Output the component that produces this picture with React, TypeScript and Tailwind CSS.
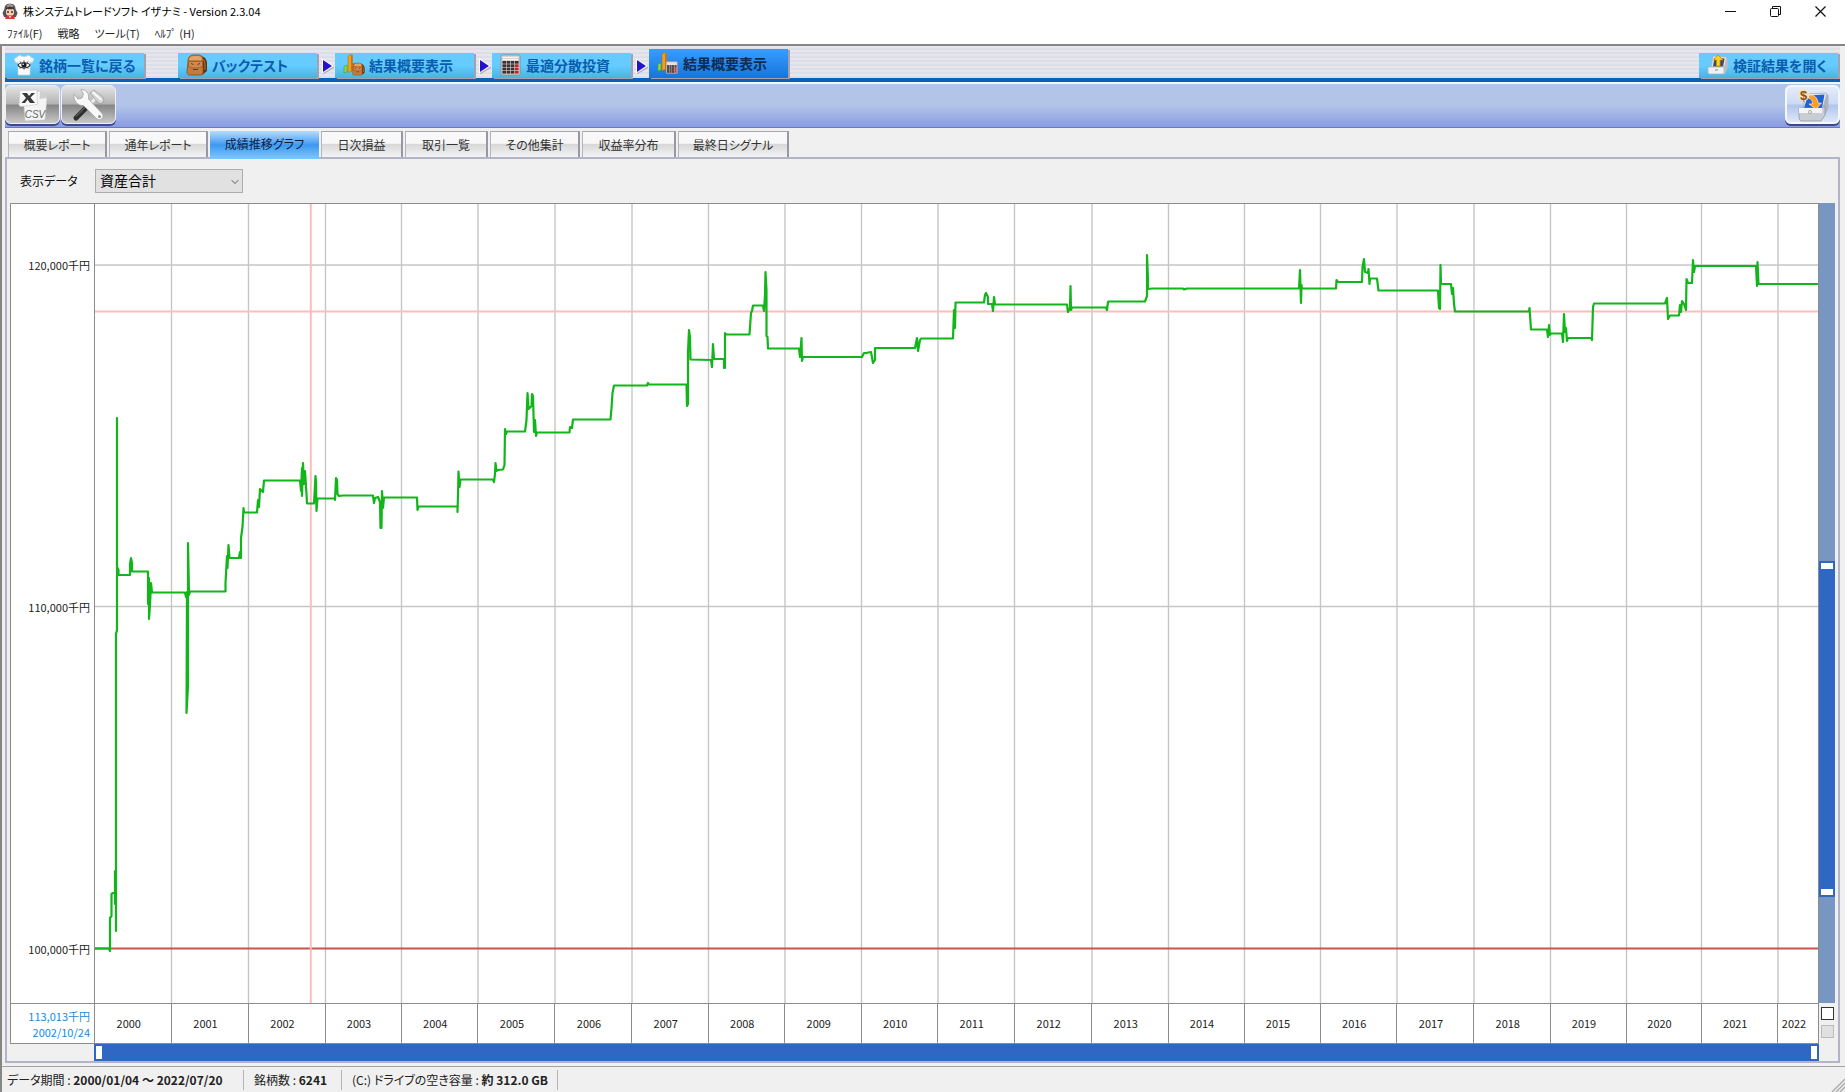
import { useState } from 'react';
import type { ReactNode } from 'react';
import { ChevronDown } from 'lucide-react';

/* ---------- icons ---------- */

function GirlIcon() {
  return (
    <svg viewBox="0 0 16 16" className="size-4" aria-hidden="true">
      <path d="M2.500 6C2.500 2 5 .8 8 .8s5.500 1.200 5.500 5.200l2 4-1.500 4-3 .5H5L2 14 .5 10z" fill="#5a5054" />
      <path d="M4.500 2.500 8 .5l3.500 2-1 2h-5z" fill="#9b9598" />
      <path d="M4 6h8v4c0 2-2 3-4 3s-4-1-4-3z" fill="#f7cfae" />
      <path d="M4 7.500 5.500 5 7 7l1-2 1 2 1.500-2L12 7.500V5L8 3.500 4 5z" fill="#3b3134" />
      <path d="M5 9h2M9 9h2" stroke="#403030" strokeWidth="1.300" />
      <path d="M4 13.500 7 12.500h2l3 1 1 2.500H3z" fill="#d8352c" />
      <path d="M7.200 13h1.600v1.500H7.200z" fill="#fff" />
    </svg>
  );
}

function ShirtIcon() {
  return (
    <svg viewBox="0 0 22 22" className="size-[22px]" aria-hidden="true">
      <path d="M7 1c1 2 7 2 8 0l6 4-2 4-2-1v13H5V8L3 9 1 5z" fill="#f8fafc" stroke="#c4d4e0" strokeWidth=".7" />
      <path d="M5 11c2-3 10-3 12 0-2 4-10 4-12 0z" fill="#fff" stroke="#2a2a2a" strokeWidth="1.200" />
      <circle cx="11" cy="11" r="2.600" fill="#1d1d1d" />
      <circle cx="10.200" cy="10.300" r=".8" fill="#fff" />
      <path d="M7 7.500l.8 1.300M11 6.500V8M15 7.500l-.8 1.300M7 14.500l.8-1M11 15.500V14M15 14.500l-.8-1" stroke="#333" strokeWidth="1" />
    </svg>
  );
}

function PackShape() {
  return (
    <>
      <path d="M14 2c5 0 7 4 7 8v7l-5 4z" fill="#5e3210" />
      <path d="M16.500 5c2 1 2.500 3 2.500 6v5" stroke="#a86a34" strokeWidth="1.200" fill="none" />
      <path d="M2 7c0-4 2-6 6-6h4c4 0 5 2 5 6v11c0 2-1 3-3 3H4c-2 0-3-1-3-3z" fill="#c47c3c" stroke="#8a4b18" strokeWidth=".8" />
      <path d="M3 6c1-3 2-4 5-4h4c2 0 3.500 1 4 4z" fill="#e0a468" />
      <path d="M2.500 7.500h14v5c-4 2-10 2-14 0z" fill="#d08a4c" stroke="#8a4b18" strokeWidth=".6" />
      <path d="M5 9.500l2.500 1M14 9.500l-2.500 1M7 15.500h5" stroke="#6b3a12" strokeWidth="1" fill="none" />
    </>
  );
}

function BarsShape() {
  return (
    <>
      <path d="M1 12l3-1v7l-3 1z" fill="#8fd63a" stroke="#3e9a1c" strokeWidth=".5" />
      <path d="M5 2l3-1.500L9.500 1v16L5 18.500z" fill="#f0a020" stroke="#b56a10" strokeWidth=".5" />
      <path d="M8 .8l1.500.2v16L8 17.500z" fill="#c47712" />
      <path d="M9.500 9h3v7l-3 1z" fill="#e05a28" />
    </>
  );
}

function CalcShape() {
  const cells = [0, 1, 2, 3];
  return (
    <>
      <rect x="1" y="1" width="19" height="20" rx="1.500" fill="#d8d5d5" stroke="#8d8585" strokeWidth=".8" />
      <path d="M3 3.500h15M3 5.500h15" stroke="#f6f4f4" strokeWidth="1" />
      {cells.map((row) =>
        cells.map((col) => (
          <rect
            key={`${row}-${col}`}
            x={2.4 + col * 4.2}
            y={7 + row * 3.3}
            width="3.600"
            height="2.700"
            fill={col === 3 && row > 0 ? '#c4222a' : '#3c3030'}
          />
        )),
      )}
    </>
  );
}

function BackpackIcon() {
  return (
    <svg viewBox="0 0 22 22" className="size-[22px]" aria-hidden="true">
      <PackShape />
    </svg>
  );
}

function CalculatorIcon() {
  return (
    <svg viewBox="0 0 22 22" className="size-[22px]" aria-hidden="true">
      <CalcShape />
    </svg>
  );
}

function BarsPackIcon() {
  return (
    <svg viewBox="0 0 22 22" className="size-[22px]" aria-hidden="true">
      <BarsShape />
      <g transform="translate(9 8.500) scale(.6)">
        <PackShape />
      </g>
    </svg>
  );
}

function BarsCalcIcon() {
  return (
    <svg viewBox="0 0 22 22" className="size-[22px]" aria-hidden="true">
      <BarsShape />
      <g transform="translate(8.500 9) scale(.6)">
        <CalcShape />
      </g>
    </svg>
  );
}

function OpenTrayIcon() {
  return (
    <svg viewBox="0 0 22 22" className="size-[22px]" aria-hidden="true">
      <path d="M6 2l14 1-2 10H4z" fill="#dfe1e6" stroke="#a9adb5" strokeWidth=".7" />
      <path d="M7.500 4l10 .5-1.500 8H6z" fill="#3e4a66" />
      <path d="M1 13h16v7H3c-1 0-2-.5-2-2z" fill="#eef0f3" stroke="#a9adb5" strokeWidth=".7" />
      <path d="M17 13l3-9 1 1v8l-3 7h-1z" fill="#b8bcc4" />
      <path d="M8 16h3" stroke="#888" />
      <path d="M11 1l5 5h-3v6H9.500V6H6.500z" fill="#ffd21e" stroke="#c98e08" strokeWidth=".8" />
    </svg>
  );
}

function CsvIcon() {
  return (
    <svg viewBox="0 0 32 34" className="h-[34px] w-8" aria-hidden="true">
      <path d="M6 6 23 3l7 7-2 22-20 1z" fill="#f4f4f4" stroke="#bdbdbd" strokeWidth=".6" />
      <path d="M23 3l-.5 8 7.500-1z" fill="#cfcfcf" />
      <path d="M3 2.500 20 2l.5 14.500L4 18.500l-2-1z" fill="#fafafa" stroke="#c8c8c8" strokeWidth=".6" />
      <path d="M5 5h5l2 3 2.500-3H18l-4.500 4.500L18 15h-5l-2.500-3.500L8 15H4.500L9 10z" fill="#3a3a3a" />
      <text x="18" y="30" textAnchor="middle" fontSize="10" fontStyle="italic" fill="#666" fontFamily="Liberation Sans, sans-serif">
        CSV
      </text>
    </svg>
  );
}

function ToolsIcon() {
  return (
    <svg viewBox="0 0 34 34" className="size-[34px]" aria-hidden="true">
      {/* hammer */}
      <path d="M4 30 17 17" stroke="#2e2e2e" strokeWidth="5" strokeLinecap="round" />
      <path d="M4 28.500 15 17.500" stroke="#777" strokeWidth="1" />
      <path d="M17 17l7-7" stroke="#ececec" strokeWidth="3" />
      <path d="M18 5l4-3 9 7 1 4-3 3-3-1z" fill="#d2d2d2" stroke="#8f8f8f" strokeWidth=".6" />
      <path d="M20.500 4l9 8" stroke="#fbfbfb" strokeWidth="1.800" />
      {/* wrench */}
      <path
        d="M2 6l4 5 4-1 1.500-4L9 1.500c5 0 8.500 4 7.500 9.500L30.500 26c2 3.500-2 7.500-5.500 5L11.500 17.500C6 18 1 13 2 6z"
        fill="#f8f8f8"
        stroke="#9c9c9c"
        strokeWidth=".7"
      />
      <circle cx="27.500" cy="28.500" r="1.500" fill="#8c8c8c" />
    </svg>
  );
}

function ChestIcon() {
  return (
    <svg viewBox="0 0 32 34" className="h-[34px] w-8" aria-hidden="true">
      <path d="M9 6l20-1 2 2-2 14H6z" fill="#e8eaef" stroke="#9da2ad" strokeWidth=".7" />
      <path d="M11 7.500l16.500-1L25 20H7z" fill="#1f62d0" />
      <path d="M25 21l4.500-15 2 2v12l-5 10z" fill="#aeb3bd" />
      <path d="M2 20h23l3-2v9l-4 6H4l-2-2z" fill="#c9cdd5" stroke="#8d929c" strokeWidth=".7" />
      <path d="M2 20h23v5H2z" fill="#f3f4f7" />
      <circle cx="13" cy="24" r="1.500" fill="#fff" stroke="#777" strokeWidth=".6" />
      <path d="M11 7c6-1 10 3 10 8h3.500L19 21l-7-5h3.500c0-4-2-6-5.500-6z" fill="#ff9d1c" stroke="#fff" strokeWidth=".6" />
      <circle cx="6.500" cy="7" r="6" fill="#f4e3c0" />
      <text x="6.500" y="11.500" textAnchor="middle" fontSize="13" fontWeight="bold" fill="#8f4d0c" fontFamily="Liberation Sans, sans-serif">
        $
      </text>
    </svg>
  );
}

function StepArrow() {
  return (
    <svg viewBox="0 0 14 18" className="h-[18px] w-[14px]" aria-hidden="true">
      <path d="M2 17.500V15.500l11-6.500v2z" fill="#b4b4be" />
      <path d="M1 1.500v15l12-7.500z" fill="#fff" />
      <path d="M2 3v12l9-6z" fill="#2412cf" />
    </svg>
  );
}

/* ---------- header ---------- */

interface NavTabProps {
  icon: ReactNode;
  label: string;
  active?: boolean;
}

function NavTab({ icon, label, active }: NavTabProps) {
  return (
    <button
      type="button"
      className={`flex w-[139px] items-center gap-1 pl-2 text-left text-[14px] leading-5 font-bold whitespace-nowrap shadow-[2px_1px_0_#a4a0b0] ${
        active
          ? 'h-[29px] bg-linear-to-b from-[#3a9cff] to-[#1276dc] pb-[2px] text-[#0c2c54]'
          : 'h-[25px] bg-linear-to-b from-[#66ccff] from-50% to-[#46b4de] pb-[2px] text-[#0a5cb0]'
      }`}
    >
      {icon}
      {label}
    </button>
  );
}

function TitleBar() {
  return (
    <header className="flex h-6 items-center justify-between bg-white pr-[2px] pb-[2px] pl-[2px]">
      <h1 className="flex items-center gap-[5px] text-[11px] leading-4 text-black">
        <GirlIcon />
        株システムトレードソフト イザナミ - Version 2.3.04
      </h1>
      <div className="flex h-full">
        <button type="button" aria-label="最小化" className="grid w-[45px] place-items-center">
          <svg viewBox="0 0 11 11" className="size-[11px]">
            <path d="M0 5.500h11" stroke="#111" />
          </svg>
        </button>
        <button type="button" aria-label="元に戻す" className="grid w-[45px] place-items-center">
          <svg viewBox="0 0 11 11" className="size-[11px]" fill="none" stroke="#111">
            <rect x=".5" y="2.500" width="8" height="8" rx="1" />
            <path d="M2.500 2.500V.5h8v8h-2" />
          </svg>
        </button>
        <button type="button" aria-label="閉じる" className="grid w-[45px] place-items-center">
          <svg viewBox="0 0 11 11" className="size-[11px]">
            <path d="M.5.5l10 10M10.500.5l-10 10" stroke="#111" strokeWidth="1.200" />
          </svg>
        </button>
      </div>
    </header>
  );
}

const MENU = ['ﾌｧｲﾙ(F)', '戦略', 'ツール(T)', 'ﾍﾙﾌﾟ (H)'];

function MenuBar() {
  return (
    <nav className="flex h-5 items-center gap-[15px] bg-white pb-[2px] pl-[7px] text-[11px] leading-4 text-[#222]">
      {MENU.map((item) => (
        <button key={item} type="button">
          {item}
        </button>
      ))}
    </nav>
  );
}

function StepNav() {
  return (
    <nav className="flex h-9 items-end justify-between border-b-4 border-[#0a62b6] bg-[repeating-linear-gradient(to_bottom,#e6e6ee_0_2px,#dedee8_2px_4px)]">
      <div className="flex items-end">
        <NavTab icon={<ShirtIcon />} label="銘柄一覧に戻る" />
        <div className="w-[34px]" />
        <NavTab icon={<BackpackIcon />} label="バックテスト" />
        <div className="flex h-[25px] w-[18px] items-center justify-end">
          <StepArrow />
        </div>
        <NavTab icon={<BarsPackIcon />} label="結果概要表示" />
        <div className="flex h-[25px] w-[18px] items-center justify-end">
          <StepArrow />
        </div>
        <NavTab icon={<CalculatorIcon />} label="最適分散投資" />
        <div className="flex h-[25px] w-[18px] items-center justify-end">
          <StepArrow />
        </div>
        <NavTab icon={<BarsCalcIcon />} label="結果概要表示" active />
      </div>
      <div className="pr-[2px]">
        <NavTab icon={<OpenTrayIcon />} label="検証結果を開く" />
      </div>
    </nav>
  );
}

const GRAY_BUTTON =
  'grid h-[39px] w-[55px] place-items-center rounded-md border border-[#f0f0f4] bg-[linear-gradient(to_bottom,#e4e4e4,#b4b4b4_48%,#868686_52%,#c8c8c8)] shadow-[0_2px_0_#3c4a8c]';

function Toolbar() {
  return (
    <div className="flex h-[46px] items-start justify-between border-t-2 border-b border-t-[#f2f6fc] border-b-[#6c78c0] bg-linear-to-b from-[#b2c4e8] from-50% to-[#8a9ce2] pt-px">
      <div className="flex gap-px">
        <button type="button" aria-label="CSV出力" className={GRAY_BUTTON}>
          <CsvIcon />
        </button>
        <button type="button" aria-label="設定" className={GRAY_BUTTON}>
          <ToolsIcon />
        </button>
      </div>
      <button
        type="button"
        aria-label="検証結果を保存"
        className="grid h-[39px] w-[55px] place-items-center rounded-md border-2 border-[#f4f7ff] bg-[linear-gradient(to_bottom,#e4ecfa,#ccdaf4_48%,#b0c4ec_52%,#dfe8fa)] shadow-[0_2px_0_#3c4a8c]"
      >
        <ChestIcon />
      </button>
    </div>
  );
}

/* ---------- report tabs ---------- */

const TABS = [
  { label: '概要レポート', width: 'w-[99px]' },
  { label: '通年レポート', width: 'w-[99px]' },
  { label: '成績推移グラフ', width: 'w-[109px]' },
  { label: '日次損益', width: 'w-[82px]' },
  { label: '取引一覧', width: 'w-[83px]' },
  { label: 'その他集計', width: 'w-[90px]' },
  { label: '収益率分布', width: 'w-[94px]' },
  { label: '最終日シグナル', width: 'w-[111px]' },
];

function ReportTabs() {
  const [active, setActive] = useState(2);
  return (
    <div role="tablist" className="flex h-[26px] items-start gap-[2px] pl-[3px]">
      {TABS.map((tab, i) => (
        <button
          key={tab.label}
          type="button"
          role="tab"
          aria-selected={i === active}
          onClick={() => setActive(i)}
          className={`${tab.width} text-[12px] leading-4 whitespace-nowrap ${
            i === active
              ? 'z-10 h-7 bg-linear-to-b from-[#b4dcff] via-[#3c98f0] via-50% to-[#7cc8ff] pb-[2px] text-[#10203c]'
              : 'h-[26px] border-t border-r-2 border-l border-t-[#a8a8b4] border-r-[#9898a4] border-l-[#b4b4bc] bg-linear-to-b from-[#f8f8f8] from-45% via-[#d8d8d8] via-50% to-[#f4f4f4] text-[#333]'
          }`}
        >
          {tab.label}
        </button>
      ))}
    </div>
  );
}

/* ---------- chart ---------- */

// plot extents in chart units
const PLOT = { left: 95, right: 1818, top: 204, bottom: 1003 };
const PLOT_W = PLOT.right - PLOT.left;
const PLOT_H = PLOT.bottom - PLOT.top;

const YEAR_EDGES = [
  95, 171.5, 248.5, 325.5, 401.5, 478, 555, 632, 708.5, 785, 861.5, 938, 1014.5, 1092, 1168.5, 1244.5, 1320.5, 1397,
  1474, 1550.5, 1626.5, 1701.5, 1778, 1818,
];
const YEAR_COLUMNS = YEAR_EDGES.slice(1)
  .map((x, i) => `minmax(0, ${x - YEAR_EDGES[i]}fr)`)
  .join(' ');

const LEVELS = [
  { y: 265, label: '120,000千円' },
  { y: 606.5, label: '110,000千円' },
  { y: 948.5, label: '100,000千円' },
];

const EQUITY = `
  94,948.5 109,948.5 110,951 110,918 111.5,916 111.5,894 113,893 115,893 115,871 115,904 116,893 116,931 116,634 117,630
  117,418 117,567 118.5,570 118.5,575 130,575 130,564 131,558 132,563 132,571.5 148,571.5 148,604 149,578 149,619
  150,605 151,583 152,592.5 185,592.5 186,597 187,592 186.5,713 188,686 188,543 189,595 190,591.5 225.5,591.5
  225.5,583 227,556 227.5,568 228.5,545 229.5,558 239,558 240,552 241,558 241,538 242.5,527 243.5,508 244,512.5
  257,512.5 258,500 259,507 260,489 263,492 264,480.5 300,480.5 301,491 302,468 302,496 303,463 304,484 305,471
  306.5,494 307,503.5 314,503.5 315,485 315.5,476 316,482 316.5,511 317.5,498.5 335,498.5 335,500 336,478 337,480
  337.5,494 339,496 343,495.5 373,495.5 374,503 375,498 378,497 380,502 380.5,528 381.5,528 382,491 383,508 384,497.5
  417,497.5 417.5,510 418.5,506.5 457.5,506.5 457.5,512 458,495 458.5,471.5 459.5,487 460.5,479.5 493,479.5
  494,482 495,474 495.5,463 496.5,471 497.5,470 503,469.5 504.5,465 505,429 506,434 507,431.5 525,431.5
  526.5,420 527.5,393 528.5,409 531.5,406 532,394 533,396 534,432 535,420 536,436 537,432.5 569.5,432.5 570,427
  572,428 573,419.5 610.5,419.5 611.5,408 612.5,393 614,385.5 647,385.5 648,383 649,384.5 686.5,384.5
  687,406 688,404 688,352 689,330 690,337 690.5,359.5 711,360 712,367 713,344 714,359 724,359 724,368 725,368
  725,333 726,334.5 749.5,334.5 751,313 752,311 753,305.5 763,305.5 764,311 765,295 765.5,272 766.5,290 766.5,336
  767.5,337 768,348.5 799,348.5 800,357 801.5,338 802,361 803,357 862,357 864,353 866,353 871,352 873,363 875,360
  875,348 915,348 917,338 918,351 920,340 921,338.5 953,338.5 954,310 955,328 955.5,302.5 984,302.5 985,295
  986,293 988,297 988,304 992,304 993,311 994,297 995,304.5 1067,304.5 1068,312 1070,308 1070.5,286 1071,310
  1072,307.5 1106,307.5 1107,310 1108,302 1109,301.5 1145,301.5 1147,296 1147,255 1148,280 1148,289 1152,288.5
  1183,288.5 1184,289.5 1187,288.5 1299,288.5 1300,270 1301,303 1301.5,285 1302,288.5 1336,288.5 1336.5,280
  1338,282 1362,282 1362.5,267 1364,259 1365,272 1368,273 1368.5,269 1369.5,284 1370,278.5 1377,278.5 1378.5,290.5
  1438,290.5 1439,308 1440,309 1440.5,265 1441,284 1451,284 1452,294 1453,288 1454,304 1455,311.5 1529,311.5
  1529.5,308 1531,329.5 1547,329.5 1548,337 1549,325 1550,335 1551,333.5 1562,333.5 1563,342 1564,314 1565,332
  1566,328 1567,341 1568,338 1591,338 1592,340 1593,307 1594,303.5 1665,303.5 1667,298 1668,319 1670,315.5
  1679,315.5 1680,305 1681,312 1682,301 1684,304 1686,310 1686.5,279 1688,283 1692,283 1693,260 1694,272 1695,266
  1756,266 1757,286 1757.5,262 1758.5,284 1818,284`;

function Plot() {
  return (
    <svg
      viewBox={`${PLOT.left} ${PLOT.top} ${PLOT_W} ${PLOT_H}`}
      preserveAspectRatio="none"
      className="absolute inset-0 size-full"
      role="img"
      aria-label="資産合計の推移"
    >
      {YEAR_EDGES.slice(1, -1).map((x) => (
        <path key={x} d={`M${x} ${PLOT.top}V${PLOT.bottom}`} stroke="#c6c6c6" strokeWidth="1.400" />
      ))}
      {LEVELS.slice(0, 2).map(({ y }) => (
        <path key={y} d={`M${PLOT.left} ${y}H${PLOT.right}`} stroke="#c6c6c6" strokeWidth="1.400" />
      ))}
      <path d={`M${PLOT.left} 948.500H${PLOT.right}`} stroke="#c85450" strokeWidth="1.800" />
      {/* crosshair */}
      <path d={`M${PLOT.left} 311.500H${PLOT.right}M310.800 ${PLOT.top}V${PLOT.bottom}`} stroke="#ffbcbc" strokeWidth="2" />
      <polyline points={EQUITY} fill="none" stroke="#12b51a" strokeWidth="2.200" strokeLinejoin="round" />
    </svg>
  );
}

const THUMB_X =
  'pointer-events-none absolute inset-0 size-full appearance-none bg-transparent [&::-webkit-slider-thumb]:pointer-events-auto [&::-webkit-slider-thumb]:h-[13px] [&::-webkit-slider-thumb]:w-[6px] [&::-webkit-slider-thumb]:appearance-none [&::-webkit-slider-thumb]:bg-white';
const THUMB_Y =
  'pointer-events-none absolute inset-0 size-full appearance-none bg-transparent [writing-mode:vertical-lr] [&::-webkit-slider-thumb]:pointer-events-auto [&::-webkit-slider-thumb]:h-[6px] [&::-webkit-slider-thumb]:w-[12px] [&::-webkit-slider-thumb]:appearance-none [&::-webkit-slider-thumb]:bg-white';

function PeriodRange() {
  const [from, setFrom] = useState(0);
  const [to, setTo] = useState(1000);
  return (
    <div className="relative bg-[#7896c2]">
      <div
        className="absolute inset-y-0 bg-[#2f68c4]"
        style={{ left: `${from / 10}%`, right: `${100 - to / 10}%` }}
      />
      <div className="absolute inset-x-[2px] inset-y-0">
        <input type="range" aria-label="開始日" max={1000} value={from} onChange={(e) => setFrom(+e.target.value)} className={THUMB_X} />
        <input type="range" aria-label="終了日" max={1000} value={to} onChange={(e) => setTo(+e.target.value)} className={THUMB_X} />
      </div>
    </div>
  );
}

function ValueRange() {
  const [upper, setUpper] = useState(454);
  const [lower, setLower] = useState(864);
  return (
    <div className="relative bg-[#7896c2]">
      <div
        className="absolute inset-x-0 bg-[#2f68c4]"
        style={{
          top: `calc((100% - 6px) * ${upper / 1000} - 2px)`,
          bottom: `calc((100% - 6px) * ${1 - lower / 1000} - 2px)`,
        }}
      />
      <input type="range" aria-label="上限" max={1000} value={upper} onChange={(e) => setUpper(+e.target.value)} className={THUMB_Y} />
      <input type="range" aria-label="下限" max={1000} value={lower} onChange={(e) => setLower(+e.target.value)} className={THUMB_Y} />
    </div>
  );
}

function EquityChart() {
  return (
    <div className="grid min-h-0 flex-1 grid-cols-[84px_minmax(0,1fr)_16px] grid-rows-[minmax(0,1fr)_41px_17px] text-[11px] leading-4 text-[#222]">
      <div className="relative border-t border-l border-[#8c8c8c] bg-white">
        {LEVELS.map(({ y, label }) => (
          <span
            key={label}
            className="absolute right-1 -translate-y-1/2 whitespace-nowrap"
            style={{ top: `${((y - PLOT.top) / PLOT_H) * 100}%` }}
          >
            {label}
          </span>
        ))}
      </div>
      <div className="relative border-x border-t border-[#8c8c8c] bg-white">
        <Plot />
      </div>
      <ValueRange />

      <div className="flex flex-col items-end justify-center border-y border-l border-[#8c8c8c] bg-white pr-1 text-[#2288d8]">
        <span>113,013千円</span>
        <span>2002/10/24</span>
      </div>
      <div className="grid border border-[#8c8c8c] bg-white" style={{ gridTemplateColumns: YEAR_COLUMNS }}>
        {YEAR_EDGES.slice(0, -1).map((x, i) => (
          <div
            key={x}
            className="flex items-center justify-center border-r border-[#8c8c8c] pr-2 pb-[2px] last:border-r-0"
          >
            {2000 + i}
          </div>
        ))}
      </div>
      <div className="flex flex-col items-center gap-[5px] pt-1">
        <input type="checkbox" aria-label="自動調整" className="size-[13px] appearance-none border border-[#333] bg-white" />
        <input type="checkbox" aria-label="範囲固定" disabled className="size-[13px] appearance-none border border-[#bcbcbc] bg-[#e0e0e0]" />
      </div>

      <div />
      <PeriodRange />
      <div />
    </div>
  );
}

function DataSelect() {
  return (
    <div className="flex h-[44px] items-center gap-4 pl-[10px]">
      <label htmlFor="series" className="w-[59px] text-[12px] leading-4 whitespace-nowrap text-[#111]">
        表示データ
      </label>
      <div className="relative">
        <select
          id="series"
          className="block h-6 w-[148px] appearance-none border border-[#adadad] bg-[#e1e1e1] pb-[2px] pl-1 text-[14px] leading-5 text-black"
        >
          <option>資産合計</option>
        </select>
        <ChevronDown className="pointer-events-none absolute top-[7px] right-[2px] size-3 text-[#555]" strokeWidth={2} />
      </div>
    </div>
  );
}

function StatusBar() {
  return (
    <footer className="flex h-[26px] items-center border-t border-[#a4a4a4] bg-[#f0f0f0] text-[12px] leading-4 whitespace-nowrap text-[#222]">
      <p className="w-[242px] border-r border-[#b4b4b4] py-[2px] pl-[5px]">
        データ期間 : <b>2000/01/04 ～ 2022/07/20</b>
      </p>
      <p className="w-[98px] border-r border-[#b4b4b4] py-[2px] pl-[10px]">
        銘柄数 : <b>6241</b>
      </p>
      <p className="w-[216px] border-r border-[#b4b4b4] py-[2px] pl-[10px]">
        (C:) ドライブの空き容量 : <b>約 312.0 GB</b>
      </p>
      <svg viewBox="0 0 14 14" className="mt-auto ml-auto size-[14px]" aria-hidden="true">
        <path d="M1 14 14 1M5 14l9-9M9 14l5-5" stroke="#a8a8a8" strokeWidth="1.300" />
      </svg>
    </footer>
  );
}

export default function App() {
  return (
    <div className="flex h-screen flex-col bg-[#f0f0f0] font-['Noto_Sans_CJK_JP',sans-serif] [font-feature-settings:'palt']">
      <TitleBar />
      <MenuBar />
      <div className="flex min-h-0 flex-1 flex-col border-t-2 border-l-2 border-[#868686]">
        <main className="flex min-h-0 flex-1 flex-col pr-[5px] pb-[3px] pl-[3px]">
          <StepNav />
          <Toolbar />
          <div className="h-[3px]" />
          <ReportTabs />
          <section className="flex min-h-0 flex-1 flex-col border-2 border-[#b4b4c8] px-[3px]">
            <DataSelect />
            <EquityChart />
          </section>
        </main>
        <StatusBar />
      </div>
    </div>
  );
}
